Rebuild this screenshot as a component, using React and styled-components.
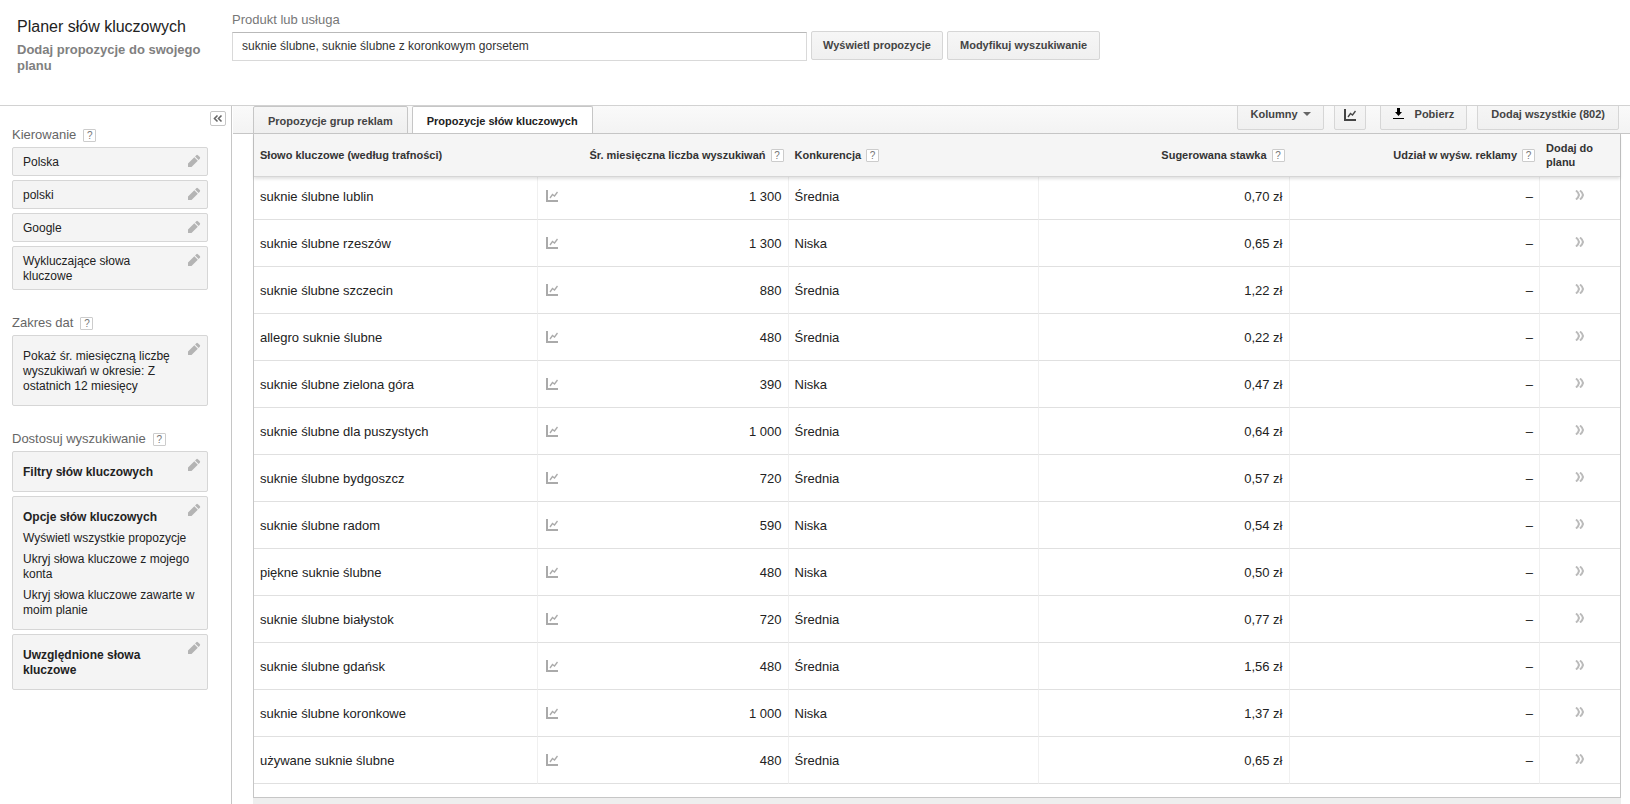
import React, { useState } from 'react';
import styled, { createGlobalStyle } from 'styled-components';

// Global Styles
const GlobalStyle = createGlobalStyle`
  * {
    box-sizing: border-box;
  }

  body {
    margin: 0;
    font-family: 'Liberation Sans', Arial, sans-serif;
    font-size: 13px;
    line-height: 16px;
    color: #222;
    background: #fff;
  }

  button, input {
    font-family: inherit;
  }
`;

const Page = styled.div`
  display: flex;
  flex-direction: column;
  min-height: 100vh;
`;

// Header
const Header = styled.header`
  display: flex;
  height: 106px;
  border-bottom: 1px solid #d2d2d2;
`;

const Heading = styled.div`
  flex: none;
  width: 232px;
  padding: 17px 16px 0 17px;
`;

const Title = styled.h1`
  margin: 0 0 5px;
  font-size: 16px;
  line-height: 20px;
  font-weight: normal;
  white-space: nowrap;
`;

const Subtitle = styled.p`
  margin: 0;
  font-size: 13px;
  line-height: 16px;
  font-weight: bold;
  color: #808080;
`;

const SearchForm = styled.form`
  flex: 1;
  min-width: 0;
  padding: 12px 16px 0 0;
`;

const SearchLabel = styled.label`
  display: block;
  margin-bottom: 3px;
  color: #777;
`;

const SearchRow = styled.div`
  display: flex;
  gap: 4px;
`;

const SearchInput = styled.input`
  flex: 0 1 575px;
  min-width: 0;
  height: 29px;
  margin-top: 1px;
  padding: 0 9px 2px;
  border: 1px solid #d9d9d9;
  border-top-color: #b9b9b9;
  font-size: 12px;
  color: #333;
`;

const Button = styled.button`
  display: inline-flex;
  flex: none;
  align-items: center;
  justify-content: center;
  height: 29px;
  padding: 0 ${(props) => props.$pad || 12}px 2px;
  border: 1px solid #d6d6d6;
  border-radius: 2px;
  background: linear-gradient(#f6f6f6, #f0f0f0);
  font-size: 11px;
  font-weight: bold;
  color: #444;
  white-space: nowrap;
  cursor: pointer;
`;

const ToolButton = styled(Button)`
  gap: 11px;
  padding-bottom: 4px;
`;

const Body = styled.div`
  display: flex;
  flex: 1;
`;

// Sidebar
const Sidebar = styled.aside`
  display: flex;
  flex: none;
  align-items: flex-start;
  gap: 2px;
  width: 232px;
  padding: 0 5px 0 12px;
  border-right: 1px solid #c6c6c6;
`;

const Sections = styled.div`
  display: flex;
  flex: 1;
  flex-direction: column;
  gap: 25px;
  padding-top: 21px;
`;

const CollapseButton = styled.button`
  display: flex;
  align-items: center;
  justify-content: center;
  width: 16px;
  height: 15px;
  margin-top: 5px;
  padding: 0;
  border: 1px solid #c6c6c6;
  border-radius: 2px;
  background: #fff;
  color: #666;
  cursor: pointer;
`;

const SectionTitle = styled.h2`
  display: flex;
  align-items: center;
  gap: 7px;
  margin: 0 0 4px;
  font-size: 13px;
  line-height: 16px;
  font-weight: normal;
  color: #666;
`;

const HelpButton = styled.button`
  display: inline-flex;
  flex: none;
  align-items: center;
  justify-content: center;
  width: 13px;
  height: 13px;
  padding: 0;
  border: 1px solid #ccc;
  border-radius: 1px;
  background: #fff;
  font-size: 10px;
  line-height: 11px;
  color: #777;
  cursor: pointer;
`;

const CardList = styled.div`
  display: flex;
  flex-direction: column;
  gap: 4px;
`;

const Card = styled.div`
  position: relative;
  padding: ${(props) => (props.$tall ? '13px 10px 11px' : '7px 10px 5px')};
  border: 1px solid #d6d6d6;
  border-radius: 2px;
  background: #f4f4f4;
  font-size: 12px;
  line-height: 15px;
`;

const CardText = styled.div`
  padding-right: 24px;
  font-weight: ${(props) => (props.$bold ? 'bold' : 'normal')};
`;

const CardOption = styled.div`
  margin-top: 6px;
`;

const EditButton = styled.button`
  position: absolute;
  top: 6px;
  right: 6px;
  display: flex;
  padding: 0;
  border: none;
  background: none;
  color: #b4b4b4;
  cursor: pointer;
`;

// Results
const Main = styled.main`
  display: flex;
  flex: 1;
  flex-direction: column;
  min-width: 0;
  padding-left: 1px;
`;

const TabBar = styled.div`
  display: flex;
  align-items: flex-end;
  justify-content: space-between;
  height: 28px;
  padding: 0 11px 0 20px;
  overflow: hidden;
  border-bottom: 1px solid #c6c6c6;
  background: linear-gradient(#fafafa, #f3f3f3);
`;

const Tabs = styled.div`
  display: flex;
  flex: none;
  gap: 4px;
  margin-bottom: -1px;
`;

const Tab = styled.button`
  height: 28px;
  padding: 2px 14px 0;
  border: 1px solid #c6c6c6;
  border-bottom-color: ${(props) => (props.$active ? '#fff' : '#c6c6c6')};
  border-radius: 2px 2px 0 0;
  background: ${(props) => (props.$active ? '#fff' : 'linear-gradient(#f6f6f6, #efefef)')};
  font-size: 11px;
  font-weight: bold;
  color: ${(props) => (props.$active ? '#222' : '#444')};
  white-space: nowrap;
  cursor: pointer;
`;

const Actions = styled.div`
  display: flex;
  gap: 10px;
  margin-bottom: 3px;
`;

const ActionGroup = styled.div`
  display: flex;
  gap: 10px;
  margin-right: 4px;
`;

const ButtonText = styled.span`
  display: inline-flex;
  align-items: center;
  gap: 5px;
`;

const Caret = styled.span`
  border: 4px solid transparent;
  border-top-color: #666;
  border-bottom: none;
`;

const Results = styled.section`
  margin-right: 9px;
  margin-left: 20px;
  padding-bottom: 13px;
  border: solid #c6c6c6;
  border-width: 0 1px 1px;
`;

const Table = styled.table`
  width: 100%;
  table-layout: fixed;
  border-collapse: separate;
  border-spacing: 0;
`;

const HeadRow = styled.tr`
  position: relative;
  box-shadow: 0 2px 3px rgba(0, 0, 0, 0.12);
`;

const Th = styled.th`
  width: ${(props) => props.$width || 'auto'};
  height: 43px;
  padding: 0 5px 0 6px;
  border-bottom: 1px solid #d6d6d6;
  background: #f5f5f5;
  font-size: 11px;
  line-height: 14px;
  text-align: ${(props) => props.$align || 'left'};
  color: #333;
`;

const ThContent = styled.div`
  display: flex;
  align-items: center;
  justify-content: ${(props) => (props.$align === 'right' ? 'flex-end' : 'flex-start')};
  gap: 5px;
`;

const Row = styled.tr`
  &:first-child td {
    padding-top: 12px;
  }
`;

const Td = styled.td`
  padding: 16px 6px 14px;
  border-right: 1px solid #f0f0f0;
  border-bottom: 1px solid #e0e0e0;
  text-align: ${(props) => props.$align || 'left'};

  &:last-child {
    border-right: none;
  }
`;

const Volume = styled.div`
  display: flex;
  align-items: flex-start;
  justify-content: space-between;
  padding-left: 2px;
`;

const IconButton = styled.button`
  display: inline-flex;
  padding: 1px 0 3px;
  border: none;
  background: none;
  vertical-align: top;
  color: ${(props) => props.$color || '#aaa'};
  cursor: pointer;
`;

const BottomStrip = styled.div`
  flex: 1;
  min-height: 6px;
  margin-right: 9px;
  margin-left: 20px;
  background: #eee;
`;

// Icons
const ChartIcon = () => (
  <svg width="12" height="12" viewBox="0 0 12 12" fill="none" stroke="currentColor">
    <path d="M1 0v11h11" strokeWidth="2" />
    <path d="M4 8l2.5-3.5 2 1.500 3-4" strokeWidth="1.3" />
  </svg>
);

const PencilIcon = () => (
  <svg width="14" height="14" viewBox="0 0 14 14" fill="currentColor">
    <path d="M1 9.500L7.300 3.200l3.500 3.500L4.500 13H1zM8.100 2.400l1.200-1.200q.8-.8 1.600 0l1.900 1.900q.8.8 0 1.600l-1.200 1.200z" />
  </svg>
);

const DownloadIcon = () => (
  <svg width="11" height="11" viewBox="0 0 11 11" fill="#000">
    <path d="M4 0h3v4h2L5.500 8 2 4h2zM0 10h11v1H0z" />
  </svg>
);

const CollapseIcon = () => (
  <svg width="10" height="9" viewBox="0 0 10 9" fill="none" stroke="currentColor" strokeWidth="1.6">
    <path d="M4.500 1.500l-3 3 3 3M8.500 1.500l-3 3 3 3" />
  </svg>
);

const AddIcon = () => (
  <svg width="10" height="10" viewBox="0 0 10 10" fill="none" stroke="currentColor" strokeWidth="2">
    <path d="M1 .5q2.500 2 3 4.500-.5 2.500-3 4.500M5 .5q2.500 2 3 4.500-.5 2.500-3 4.500" />
  </svg>
);

const Help = () => <HelpButton type="button" aria-label="Pomoc">?</HelpButton>;

const Edit = () => (
  <EditButton type="button" aria-label="Edytuj">
    <PencilIcon />
  </EditButton>
);

const targeting = ['Polska', 'polski', 'Google', 'Wykluczające słowa kluczowe'];

const keywordOptions = [
  'Wyświetl wszystkie propozycje',
  'Ukryj słowa kluczowe z mojego konta',
  'Ukryj słowa kluczowe zawarte w moim planie',
];

const tabs = ['Propozycje grup reklam', 'Propozycje słów kluczowych'];

const keywords = [
  { name: 'suknie ślubne lublin', volume: '1 300', competition: 'Średnia', bid: '0,70 zł' },
  { name: 'suknie ślubne rzeszów', volume: '1 300', competition: 'Niska', bid: '0,65 zł' },
  { name: 'suknie ślubne szczecin', volume: '880', competition: 'Średnia', bid: '1,22 zł' },
  { name: 'allegro suknie ślubne', volume: '480', competition: 'Średnia', bid: '0,22 zł' },
  { name: 'suknie ślubne zielona góra', volume: '390', competition: 'Niska', bid: '0,47 zł' },
  { name: 'suknie ślubne dla puszystych', volume: '1 000', competition: 'Średnia', bid: '0,64 zł' },
  { name: 'suknie ślubne bydgoszcz', volume: '720', competition: 'Średnia', bid: '0,57 zł' },
  { name: 'suknie ślubne radom', volume: '590', competition: 'Niska', bid: '0,54 zł' },
  { name: 'piękne suknie ślubne', volume: '480', competition: 'Niska', bid: '0,50 zł' },
  { name: 'suknie ślubne białystok', volume: '720', competition: 'Średnia', bid: '0,77 zł' },
  { name: 'suknie ślubne gdańsk', volume: '480', competition: 'Średnia', bid: '1,56 zł' },
  { name: 'suknie ślubne koronkowe', volume: '1 000', competition: 'Niska', bid: '1,37 zł' },
  { name: 'używane suknie ślubne', volume: '480', competition: 'Średnia', bid: '0,65 zł' },
];

const App = () => {
  const [query, setQuery] = useState('suknie ślubne, suknie ślubne z koronkowym gorsetem');
  const [activeTab, setActiveTab] = useState(1);

  return (
    <Page>
      <GlobalStyle />
      <Header>
        <Heading>
          <Title>Planer słów kluczowych</Title>
          <Subtitle>Dodaj propozycje do swojego planu</Subtitle>
        </Heading>
        <SearchForm onSubmit={(e) => e.preventDefault()}>
          <SearchLabel htmlFor="product">Produkt lub usługa</SearchLabel>
          <SearchRow>
            <SearchInput id="product" type="text" value={query} onChange={(e) => setQuery(e.target.value)} />
            <Button type="submit" $pad={11}>Wyświetl propozycje</Button>
            <Button type="button">Modyfikuj wyszukiwanie</Button>
          </SearchRow>
        </SearchForm>
      </Header>

      <Body>
        <Sidebar>
          <Sections>
            <section>
              <SectionTitle>Kierowanie <Help /></SectionTitle>
              <CardList>
                {targeting.map((item) => (
                  <Card key={item}>
                    <CardText>{item}</CardText>
                    <Edit />
                  </Card>
                ))}
              </CardList>
            </section>

            <section>
              <SectionTitle>Zakres dat <Help /></SectionTitle>
              <Card $tall>
                <CardText>Pokaż śr. miesięczną liczbę wyszukiwań w okresie: Z ostatnich 12 miesięcy</CardText>
                <Edit />
              </Card>
            </section>

            <section>
              <SectionTitle>Dostosuj wyszukiwanie <Help /></SectionTitle>
              <CardList>
                <Card $tall>
                  <CardText $bold>Filtry słów kluczowych</CardText>
                  <Edit />
                </Card>
                <Card $tall>
                  <CardText $bold>Opcje słów kluczowych</CardText>
                  {keywordOptions.map((option) => (
                    <CardOption key={option}>{option}</CardOption>
                  ))}
                  <Edit />
                </Card>
                <Card $tall>
                  <CardText $bold>Uwzględnione słowa kluczowe</CardText>
                  <Edit />
                </Card>
              </CardList>
            </section>
          </Sections>
          <CollapseButton type="button" aria-label="Zwiń panel">
            <CollapseIcon />
          </CollapseButton>
        </Sidebar>

        <Main>
          <TabBar>
            <Tabs>
              {tabs.map((tab, idx) => (
                <Tab key={tab} type="button" $active={idx === activeTab} onClick={() => setActiveTab(idx)}>
                  {tab}
                </Tab>
              ))}
            </Tabs>
            <Actions>
              <ActionGroup>
                <ToolButton type="button">
                  <ButtonText>Kolumny <Caret /></ButtonText>
                </ToolButton>
                <Button type="button" $pad={9} aria-label="Wykres"><ChartIcon /></Button>
              </ActionGroup>
              <ToolButton type="button">
                <DownloadIcon /> Pobierz
              </ToolButton>
              <ToolButton type="button" $pad={13}>Dodaj wszystkie (802)</ToolButton>
            </Actions>
          </TabBar>

          <Results>
            <Table>
              <thead>
                <HeadRow>
                  <Th $width="284px">Słowo kluczowe (według trafności)</Th>
                  <Th $align="right">
                    <ThContent $align="right">Śr. miesięczna liczba wyszukiwań <Help /></ThContent>
                  </Th>
                  <Th>
                    <ThContent>Konkurencja <Help /></ThContent>
                  </Th>
                  <Th $align="right">
                    <ThContent $align="right">Sugerowana stawka <Help /></ThContent>
                  </Th>
                  <Th $align="right">
                    <ThContent $align="right">Udział w wyśw. reklamy <Help /></ThContent>
                  </Th>
                  <Th $width="80px">Dodaj do planu</Th>
                </HeadRow>
              </thead>
              <tbody>
                {keywords.map((keyword) => (
                  <Row key={keyword.name}>
                    <Td>{keyword.name}</Td>
                    <Td>
                      <Volume>
                        <IconButton type="button" aria-label="Trend">
                          <ChartIcon />
                        </IconButton>
                        <span>{keyword.volume}</span>
                      </Volume>
                    </Td>
                    <Td>{keyword.competition}</Td>
                    <Td $align="right">{keyword.bid}</Td>
                    <Td $align="right">–</Td>
                    <Td $align="center">
                      <IconButton type="button" $color="#bbb" aria-label="Dodaj do planu">
                        <AddIcon />
                      </IconButton>
                    </Td>
                  </Row>
                ))}
              </tbody>
            </Table>
          </Results>
          <BottomStrip />
        </Main>
      </Body>
    </Page>
  );
};

export default App;
